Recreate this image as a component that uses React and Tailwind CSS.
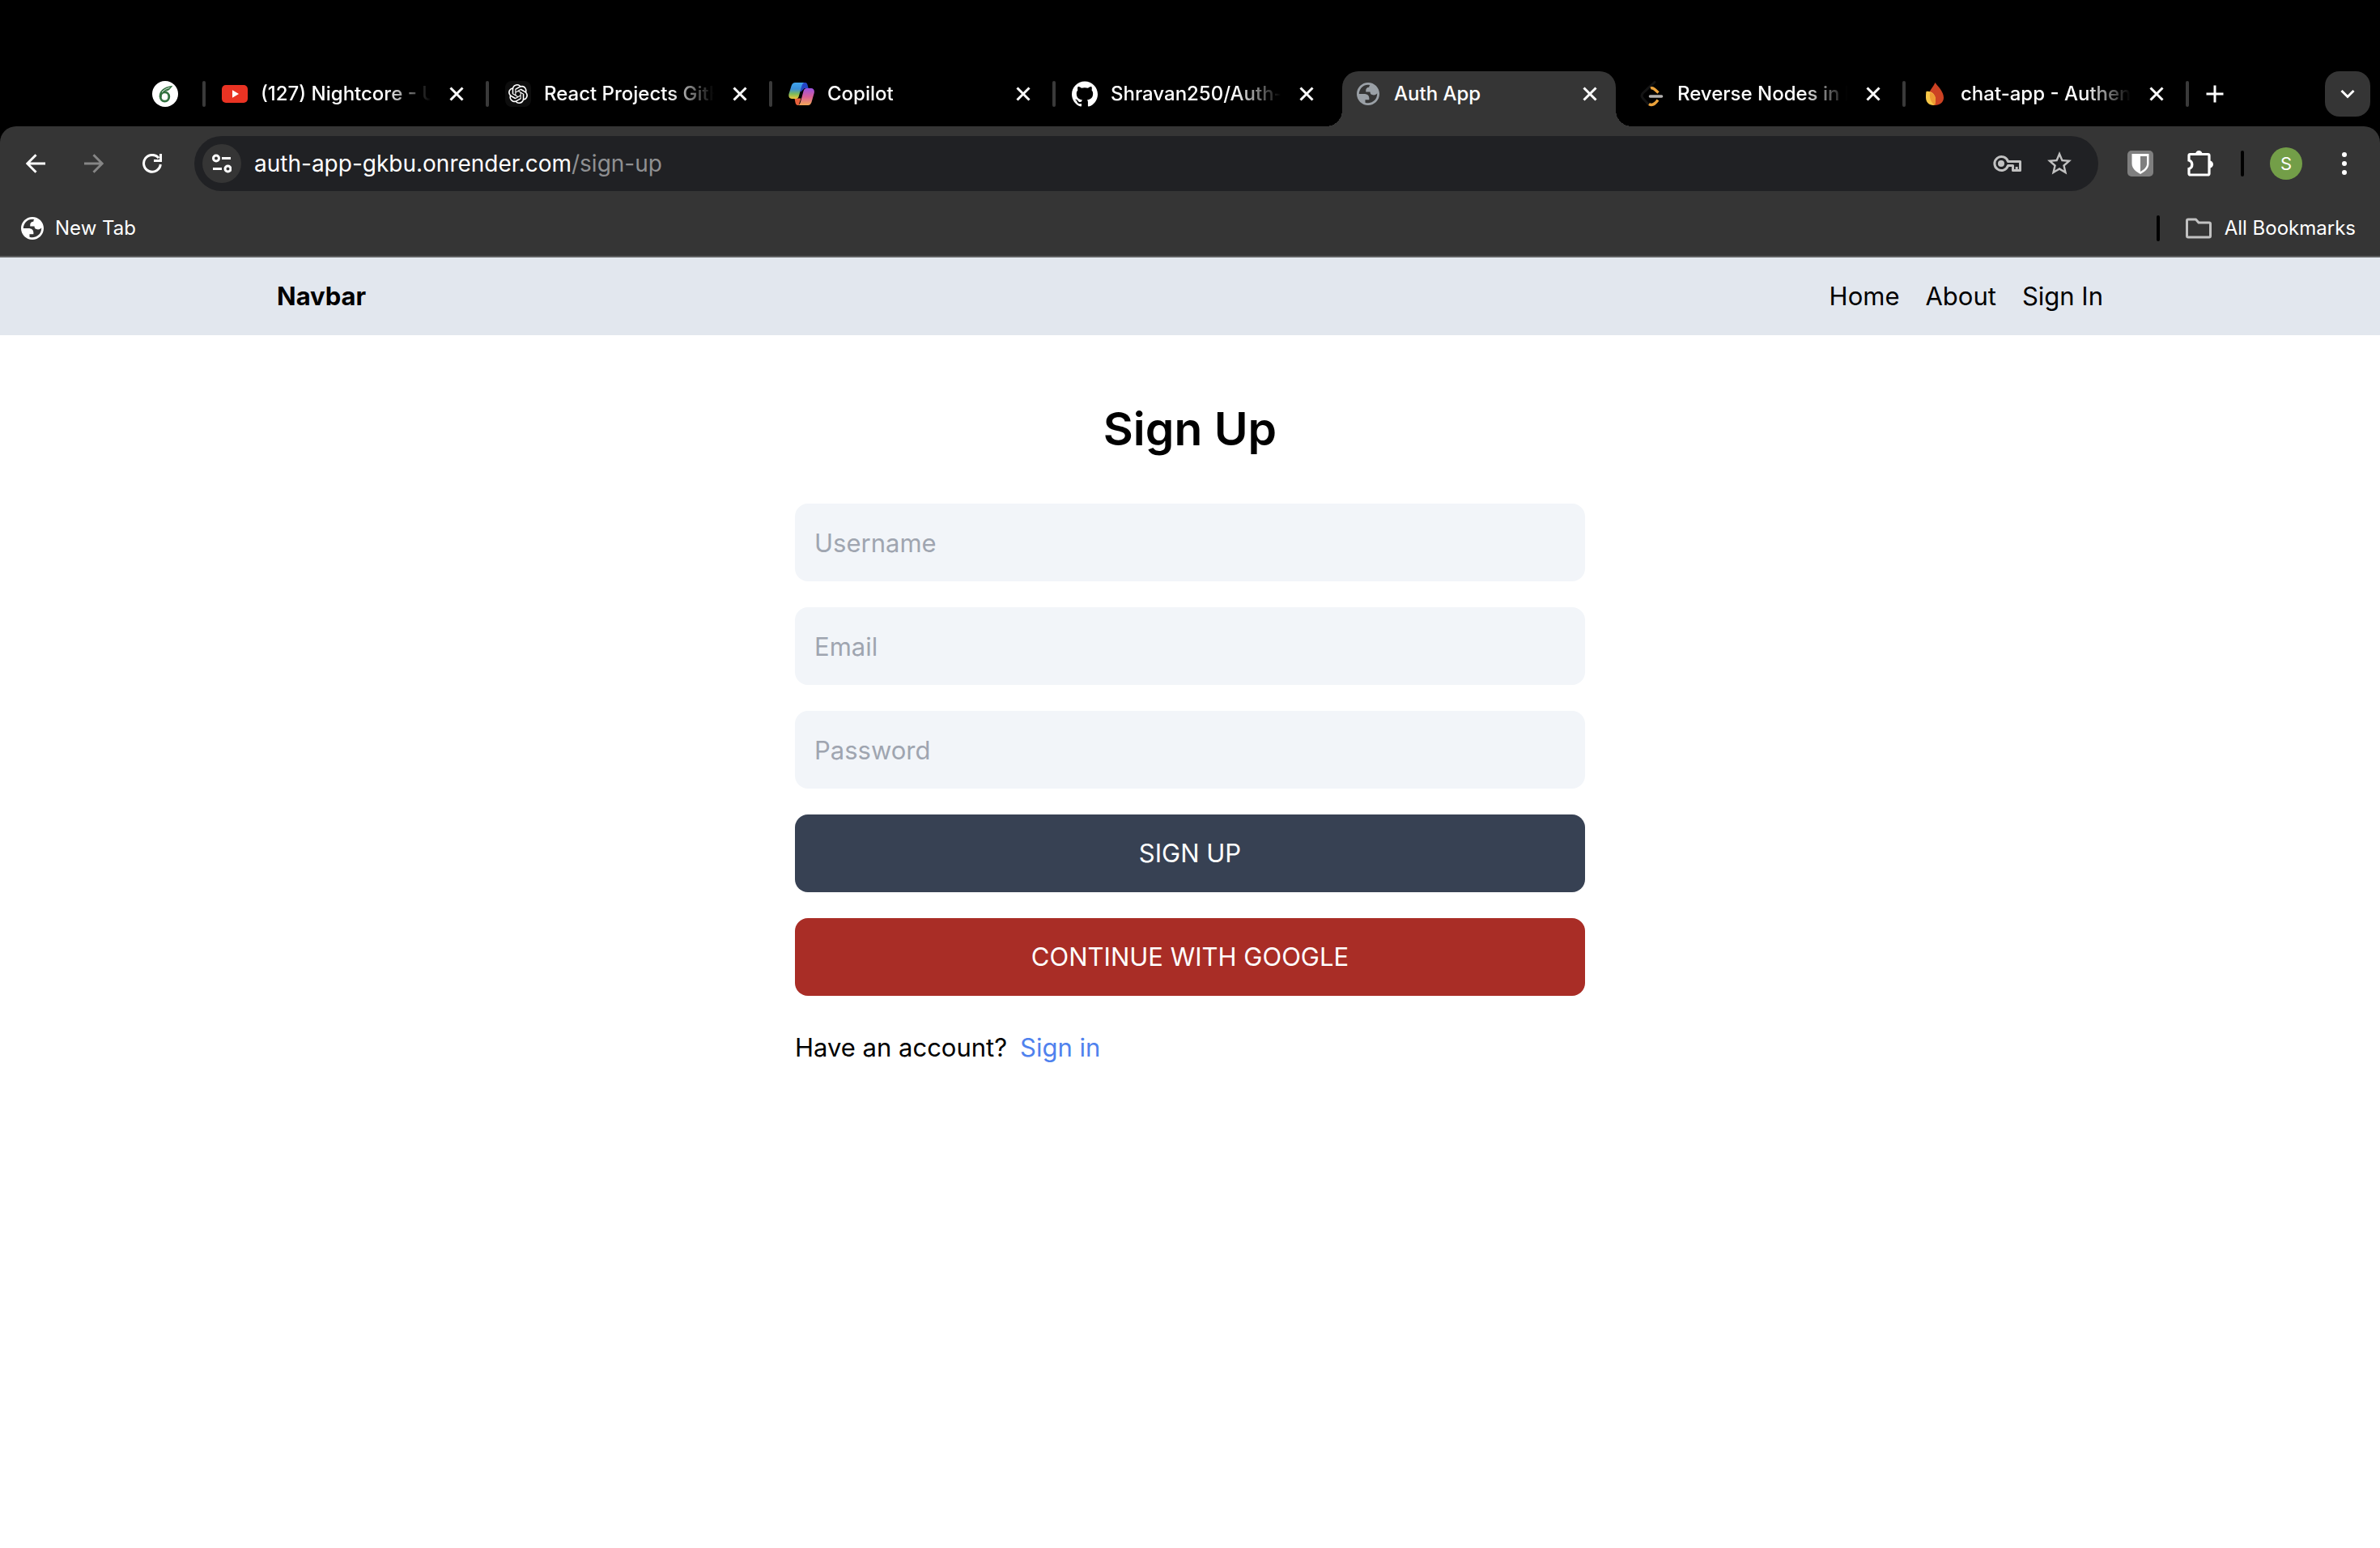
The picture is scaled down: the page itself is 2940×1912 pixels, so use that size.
import React from "react";
import { SiOpenai, SiGithub } from "react-icons/si";
import { MdStarBorder } from "react-icons/md";

function Globe({ className }) {
  return (
    <svg viewBox="2 2 20 20" className={className} fill="currentColor" aria-hidden="true">
      <path
        fillRule="evenodd"
        d="M12 2C6.480 2 2 6.480 2 12s4.480 10 10 10 10-4.480 10-10S17.520 2 12 2zM4 12h4.400c3.407.022 4.922 1.730 4.543 5.127H9.488v2.470a8.004 8.004 0 0 0 10.498-8.083C19.327 12.504 18.332 13 17 13c-2.137 0-3.206-.916-3.206-2.750h-3.748c-.274-2.728.683-4.092 2.870-4.092 0-.975.327-1.597.811-1.970A8.004 8.004 0 0 0 4 12z"
      />
    </svg>
  );
}

function Leaf() {
  return (
    <svg viewBox="0 0 32 32" className="size-8 shrink-0" role="img" aria-label="Overleaf">
      <circle cx="16" cy="16" r="16" fill="#fff" />
      <ellipse cx="15.500" cy="19.500" rx="5.300" ry="5.600" fill="none" stroke="#32713f" strokeWidth="2.800" />
      <path d="M8.800 20C8 13 13.500 7 25.500 5.800 23 8.500 21.500 12.500 15.500 13c-2.500 1.200-3.700 3.800-4 7z" fill="#32713f" />
      <path d="M12 14C14.500 10.800 18 9.300 21.500 8.300" stroke="#fff" strokeWidth="0.900" fill="none" />
    </svg>
  );
}

function YouTube() {
  return (
    <svg viewBox="0 0 32 32" className="size-8 shrink-0" aria-hidden="true">
      <rect y="5" width="32" height="22" rx="5" fill="#ea3323" />
      <path d="M13 11.300v9.400l8-4.700z" fill="#fff" />
    </svg>
  );
}

function ChatGpt() {
  return (
    <span className="flex size-8 shrink-0 items-center justify-center rounded-lg bg-[#0d0d0d]">
      <SiOpenai className="size-6 text-white" />
    </span>
  );
}

function Copilot() {
  return (
    <svg viewBox="0 0 32 32" className="size-8 shrink-0" aria-hidden="true">
      <defs>
        <linearGradient id="cpBlue" x1="0" y1="0" x2="0" y2="1">
          <stop offset="0" stopColor="#3fa4ee" />
          <stop offset="0.400" stopColor="#3a8fd8" />
          <stop offset="0.700" stopColor="#7dbb5a" />
          <stop offset="1" stopColor="#f2c63c" />
        </linearGradient>
        <linearGradient id="cpPink" x1="0" y1="0" x2="0" y2="1">
          <stop offset="0" stopColor="#9b52e0" />
          <stop offset="0.500" stopColor="#d95f97" />
          <stop offset="1" stopColor="#f3a957" />
        </linearGradient>
      </defs>
      <path d="M16 2h4.500c2.500 0 3 2 3.600 5l.6 2h-5l-5 5z" fill="#2344c4" />
      <path d="M7.500 21.500h8l-3 8.500h-1C8.500 30 8.500 26 7.500 21.500z" fill="#e8603a" />
      <path d="M8.500 2h11c-2 .5-2.800 3-3.600 6l-3 10.500c-.6 2.200-1.500 3.500-3.600 3.500H4c-3 0-4.200-2.500-3.500-6L3.600 6C4.500 3.200 6 2 8.500 2z" fill="url(#cpBlue)" />
      <path d="M22.500 9H28c3 0 4.500 2.500 3.700 6l-3 10.500C27.700 28.800 26.500 30 23.500 30h-12c2 0 3-2.500 3.800-5.500l3.200-12C19.200 10.200 20.200 9 22.500 9z" fill="url(#cpPink)" />
    </svg>
  );
}

function LeetCode() {
  return (
    <svg viewBox="0 0 32 32" className="size-8 shrink-0" fill="none" aria-hidden="true">
      <path d="M20 1.500 5.500 15c-1.800 2-1.800 4.500 0 6.500L12 28.500" stroke="#141414" strokeWidth="3" strokeLinecap="round" />
      <path d="M15 9c3.200-1.200 5.500 1.500 9.500 5.500" stroke="#eca33b" strokeWidth="3.400" />
      <path d="M13 28.500c4 2.500 7.500 0 11-5" stroke="#eca33b" strokeWidth="3.400" />
      <path d="M14.500 19H28.500" stroke="#b3b1b0" strokeWidth="3.600" strokeLinecap="round" />
    </svg>
  );
}

function Firebase() {
  return (
    <svg viewBox="0 0 32 32" className="size-8 shrink-0" aria-hidden="true">
      <path d="M16.500 2C20 7 27 13 27 20.500 27 26.500 22 30 16.500 30 10.500 30 7.500 24 8.500 17 9.500 11 14 8 16.500 2z" fill="#cd4223" />
      <path d="M5.500 13C11 12 17 16 17 23c0 3.500-1 6-2.500 7C8.500 30 5 26 5 20.500c0-3 0-5.500.5-7.500z" fill="#f7c747" />
      <path d="M10.500 14C14.500 15.800 17 19 17 23.500c0 2.500 0 4.500-1 6.500C11.500 27 8.500 20 10.500 14z" fill="#ee9b33" />
    </svg>
  );
}

const tabs = [
  { title: "(127) Nightcore - U", icon: <YouTube />, end: true },
  { title: "React Projects GitH", icon: <ChatGpt />, end: true },
  { title: "Copilot", icon: <Copilot />, end: true },
  { title: "Shravan250/Auth-A", icon: <SiGithub className="size-8 shrink-0 text-white" /> },
  { title: "Auth App", icon: <Globe className="size-7 shrink-0 text-[#9aa0a6]" />, active: true },
  { title: "Reverse Nodes in k", icon: <LeetCode />, end: true },
  { title: "chat-app - Authent", icon: <Firebase />, end: true },
];

function Tab({ title, icon, active, end }) {
  return (
    <div className="flex h-full w-[350px] min-w-0 items-center">
      <div
        className={
          active
            ? "relative ml-1 flex h-full flex-1 items-center rounded-t-[20px] bg-[#353535] pr-[22px] pb-3 pl-[18px] before:absolute before:bottom-0 before:-left-5 before:size-5 before:bg-[radial-gradient(circle_at_0_0,transparent_20px,#353535_20px)] after:absolute after:-right-5 after:bottom-0 after:size-5 after:bg-[radial-gradient(circle_at_100%_0,transparent_20px,#353535_20px)]"
            : "ml-1 flex h-full min-w-0 flex-1 items-center pr-[26px] pb-3 pl-4"
        }
      >
        {icon}
        <span
          className={
            active
              ? "ml-[18px] flex-1 text-[24px] font-medium whitespace-nowrap text-white"
              : "mr-[22px] ml-4 min-w-0 flex-1 overflow-hidden text-[24px] font-medium whitespace-nowrap text-white [mask-image:linear-gradient(to_right,black_calc(100%-56px),transparent)]"
          }
        >
          {title}
        </span>
        <button aria-label={"Close " + title} className="flex size-5 shrink-0 items-center justify-center text-white">
          <svg viewBox="0 0 20 20" className="size-5" stroke="currentColor" strokeWidth="3" aria-hidden="true">
            <path d="M2.500 2.500l15 15M17.500 2.500l-15 15" />
          </svg>
        </button>
      </div>
      {end ? <Divider /> : <span className={active ? "w-2" : "w-1"} />}
    </div>
  );
}

function Divider() {
  return <span className="mb-3 h-8 w-1 shrink-0 rounded-full bg-[#3a3a3a]" />;
}

function TabStrip() {
  return (
    <div className="flex h-[156px] items-end bg-black">
      <div className="flex h-[68px] w-full items-center pr-3 pl-[188px]">
        <div className="mb-3">
          <Leaf />
        </div>
        <span className="w-[30px]" />
        <Divider />
        {tabs.map((t) => (
          <Tab key={t.title} {...t} />
        ))}
        <button aria-label="New tab" className="mb-3 ml-5 flex size-6 items-center justify-center text-white">
          <svg viewBox="0 0 24 24" className="size-6" stroke="currentColor" strokeWidth="3" aria-hidden="true">
            <path d="M12 1.500v21M1.500 12h21" />
          </svg>
        </button>
        <button aria-label="Search tabs" className="ml-auto flex h-14 w-14 items-center justify-center self-start rounded-[18px] bg-[#353535] text-white">
          <svg viewBox="0 0 20 20" className="size-5" fill="none" stroke="currentColor" strokeWidth="3" aria-hidden="true">
            <path d="M2.500 6l7.500 7.500L17.500 6" />
          </svg>
        </button>
      </div>
    </div>
  );
}

function Toolbar() {
  return (
    <div className="flex h-[92px] items-center pr-[26px] pl-8 text-white">
      <button aria-label="Back" className="flex size-6 items-center">
        <svg viewBox="0 0 24 24" className="size-6" fill="none" stroke="currentColor" strokeWidth="3" aria-hidden="true">
          <path d="M24 12H2M12.500 1.300 1.800 12l10.700 10.700" />
        </svg>
      </button>
      <button aria-label="Forward" className="ml-12 flex size-6 items-center text-[#868686]">
        <svg viewBox="0 0 24 24" className="size-6" fill="none" stroke="currentColor" strokeWidth="3" aria-hidden="true">
          <path d="M0 12h22M11.500 1.300 22.200 12 11.500 22.700" />
        </svg>
      </button>
      <button aria-label="Reload" className="ml-12 flex size-6 items-center">
        <svg viewBox="0 0 24 24" className="size-6" fill="none" stroke="currentColor" strokeWidth="3" aria-hidden="true">
          <path d="M22.300 13A10.400 10.400 0 1 1 20 5.200" />
          <path d="M22.500 0v8.500h-8.500" />
        </svg>
      </button>
      <div className="ml-10 flex h-[68px] flex-1 items-center rounded-full bg-[#202124] pr-[30px] pl-[10px]">
        <button aria-label="View site information" className="flex size-12 items-center justify-center rounded-full bg-[#353535]">
          <svg viewBox="0 0 24 24" className="size-6" fill="none" stroke="currentColor" strokeWidth="3" aria-hidden="true">
            <circle cx="5" cy="5.500" r="3.500" />
            <path d="M12 5.500h11M1 18.500h11" />
            <circle cx="19.500" cy="18.500" r="3.500" />
          </svg>
        </button>
        <div className="ml-4 flex-1 text-[28px] whitespace-nowrap">
          auth-app-gkbu.onrender.com<span className="text-[#8f9092]">/sign-up</span>
        </div>
        <button aria-label="Passwords" className="text-[#c1c1c1]">
          <svg viewBox="0 0 36 22" className="h-[22px] w-9" fill="none" stroke="currentColor" strokeWidth="3" aria-hidden="true">
            <path d="M18.500 8.500A8.500 8.500 0 1 0 18.500 13.500H24.500V19.500H33.500V8.500Z" strokeLinejoin="round" />
            <circle cx="10" cy="11" r="4" fill="currentColor" stroke="none" />
            <path d="M29.200 20v-5" />
          </svg>
        </button>
        <button aria-label="Bookmark this tab" className="ml-7 text-[#c1c1c1]">
          <MdStarBorder className="size-9" />
        </button>
      </div>
      <button aria-label="Bitwarden" className="ml-9">
        <svg viewBox="0 0 32 32" className="size-8" aria-hidden="true">
          <rect width="32" height="32" rx="5" fill="#7f7f7f" />
          <path d="M5.500 4h21v12c0 6-5 10-10.500 13C10.500 26 5.500 22 5.500 16z" fill="#fff" />
          <path d="M16 7h8v9.500c0 4-3.500 7-8 9.500z" fill="#7f7f7f" />
        </svg>
      </button>
      <button aria-label="Extensions" className="ml-[42px]">
        <svg viewBox="0 0 34 34" className="size-[34px]" fill="none" aria-hidden="true">
          <path
            d="M3.500 5.500H25.500a1.500 1.500 0 0 1 1.500 1.500V29.500a1.500 1.500 0 0 1-1.500 1.500H3.500A1.500 1.500 0 0 1 2 29.500V23.500A5.500 5.500 0 0 0 2 13V7a1.500 1.500 0 0 1 1.500-1.500Z"
            stroke="currentColor"
            strokeWidth="3.200"
          />
          <path d="M10 5.500a4.300 4.500 0 0 1 8.600 0zM27.500 13.500a4.500 4.500 0 0 1 0 9z" fill="currentColor" />
        </svg>
      </button>
      <span className="ml-8 h-8 w-1 rounded-full bg-black" />
      <button aria-label="Profile" className="ml-8 flex size-10 items-center justify-center rounded-full bg-[#739e48] text-[22px]">
        S
      </button>
      <button aria-label="Menu" className="ml-[34px] flex w-9 justify-center">
        <svg viewBox="0 0 8 32" className="h-8 w-2" fill="currentColor" aria-hidden="true">
          <circle cx="4" cy="5" r="3" />
          <circle cx="4" cy="16" r="3" />
          <circle cx="4" cy="27" r="3" />
        </svg>
      </button>
    </div>
  );
}

function BookmarksBar() {
  return (
    <div className="flex h-[68px] items-center pr-[30px] pl-[26px] text-[24px] text-white">
      <a href="#new-tab" className="flex items-center gap-[14px]">
        <Globe className="size-7" />
        New Tab
      </a>
      <span className="ml-auto h-8 w-1 rounded-full bg-black" />
      <button className="ml-8 flex items-center gap-4">
        <svg viewBox="0 0 32 26" className="h-[26px] w-8 text-[#c1c1c1]" fill="none" stroke="currentColor" strokeWidth="3" strokeLinejoin="round" aria-hidden="true">
          <path d="M3 2h9.500l3.500 4H29a1.500 1.500 0 0 1 1.500 1.500V22.500A1.500 1.500 0 0 1 29 24H3a1.500 1.500 0 0 1-1.500-1.500V3.500A1.500 1.500 0 0 1 3 2z" />
        </svg>
        All Bookmarks
      </button>
    </div>
  );
}

function Field({ label, type }) {
  return (
    <input
      type={type}
      aria-label={label}
      placeholder={label}
      className="h-24 w-full rounded-2xl bg-[#f2f5f9] px-6 text-[31px] text-black outline-none placeholder:text-[#9fa5b0]"
    />
  );
}

export default function App() {
  return (
    <div className="min-h-screen bg-white font-['Inter',sans-serif]">
      <header className="bg-black">
        <TabStrip />
        <div className="rounded-t-[20px] border-b-2 border-[#5e5f60] bg-[#353535]">
          <Toolbar />
          <BookmarksBar />
        </div>
      </header>
      <nav className="bg-[#e2e7ee]">
        <div className="mx-auto flex max-w-[2304px] items-center justify-between p-6 text-[31px] leading-[48px] text-black">
          <a href="#top" className="font-bold">Navbar</a>
          <div className="flex gap-8">
            <a href="#home">Home</a>
            <a href="#about">About</a>
            <a href="#sign-in">Sign In</a>
          </div>
        </div>
      </nav>
      <main className="mx-auto max-w-[1024px] p-6 text-[31px] leading-[48px] text-black">
        <h1 className="my-14 text-center text-[57px] leading-[72px] font-semibold">Sign Up</h1>
        <form className="flex flex-col gap-8">
          <Field label="Username" type="text" />
          <Field label="Email" type="email" />
          <Field label="Password" type="password" />
          <button type="submit" className="h-24 rounded-2xl bg-[#374153] text-white uppercase">Sign Up</button>
          <button type="button" className="h-24 rounded-2xl bg-[#a92d26] text-white uppercase">Continue with Google</button>
        </form>
        <div className="mt-10 flex gap-4">
          <p>Have an account?</p>
          <a href="#sign-in" className="text-[#4f82ee]">Sign in</a>
        </div>
      </main>
    </div>
  );
}
